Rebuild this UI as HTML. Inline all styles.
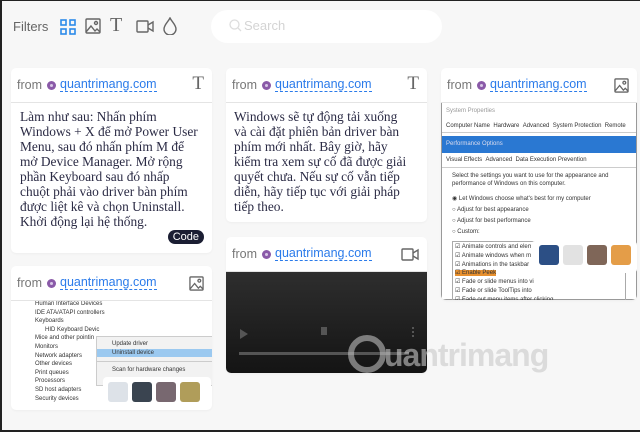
<!DOCTYPE html>
<html><head><meta charset="utf-8"><style>
*{box-sizing:border-box;margin:0;padding:0}
html,body{width:640px;height:432px;overflow:hidden}
body{background:#f7f7f7;font-family:"Liberation Sans",sans-serif;position:relative}
.abs{position:absolute}
.card{position:absolute;background:#fff;border-radius:5px;overflow:hidden;box-shadow:0 1px 2px rgba(0,0,0,.04)}
.hd{height:35px;border-bottom:1px solid #e4e4e4;display:flex;align-items:center;padding-left:6px;font-size:12.5px;color:#777;position:relative}
.dot{display:inline-block;width:9px;height:9px;border-radius:50%;background:#8a5aa8;margin:0 4px 0 5px;position:relative}
.dot:after{content:"";position:absolute;left:3px;top:3px;width:3px;height:3px;border-radius:50%;background:#d8c8e6}
.lk{color:#2b7bea;border-bottom:1px dashed #2b7bea;line-height:13px}
.ic{position:absolute;right:8px;top:9px}
.tx{font-family:"Liberation Serif","DejaVu Serif",serif;font-size:13.4px;line-height:15px;color:#2b2b45;padding:6px 11px 0 9px}
.sm{font-size:6px;color:#333;white-space:nowrap;line-height:8.6px}
.sw{position:absolute;width:20px;height:20px;border-radius:3px}
</style></head><body>
<div class="abs" style="left:0;top:0;width:2px;height:432px;background:#222"></div>
<div class="abs" style="left:0;top:0;width:640px;height:1px;background:#222"></div>
<div class="abs" style="left:0;top:430px;width:640px;height:2px;background:#222"></div>
<div class="abs" style="left:13px;top:19px;font-size:13px;color:#666">Filters</div>
<svg class="abs" style="left:60px;top:19px" width="16" height="16" viewBox="0 0 16 16" fill="none" stroke="#2b8aea" stroke-width="1.6"><rect x="1" y="1" width="5" height="5"/><rect x="10" y="1" width="5" height="5"/><rect x="1" y="10" width="5" height="5"/><rect x="10" y="10" width="5" height="5"/></svg>
<svg class="abs" style="left:85px;top:18px" width="16" height="16" viewBox="0 0 16 16" fill="none" stroke="#666" stroke-width="1.4"><rect x="1" y="1" width="14" height="14" rx="1"/><circle cx="11" cy="5" r="1.5"/><path d="M1 14l5-6 4 5 2-2 3 3"/></svg>
<div class="abs" style="left:110px;top:14px;font-family:'Liberation Serif',serif;font-size:20px;color:#666">T</div>
<svg class="abs" style="left:136px;top:20px" width="18" height="13" viewBox="0 0 18 13" fill="none" stroke="#666" stroke-width="1.4"><rect x="1" y="1" width="11" height="11" rx="1"/><path d="M12 5l5-3v9l-5-3"/></svg>
<svg class="abs" style="left:163px;top:17px" width="14" height="18" viewBox="0 0 14 18" fill="none" stroke="#666" stroke-width="1.4"><path d="M7 1C5 5 1 8 1 12a6 6 0 0012 0C13 8 9 5 7 1z"/></svg>
<div class="abs" style="left:211px;top:10px;width:231px;height:33px;background:#fff;border-radius:17px"></div>
<svg class="abs" style="left:229px;top:19px" width="13" height="13" viewBox="0 0 13 13" fill="none" stroke="#ddd" stroke-width="1.3"><circle cx="5.5" cy="5.5" r="4.5"/><path d="M9 9l3 3"/></svg>
<div class="abs" style="left:244px;top:18px;font-size:13px;color:#d4d4d4">Search</div>

<div class="card" style="left:11px;top:68px;width:201px;height:185px">
<div class="hd">from<span class="dot"></span><span class="lk">quantrimang.com</span><span class="ic" style="font-family:'Liberation Serif',serif;font-size:19px;top:5px;color:#666">T</span></div>
<div class="tx">Làm như sau: Nhấn phím Windows + X để mở Power User Menu, sau đó nhấn phím M để mở Device Manager. Mở rộng phần Keyboard sau đó nhấp chuột phải vào driver bàn phím được liệt kê và chọn Uninstall. Khởi động lại hệ thống.</div>
<div class="abs" style="right:8px;bottom:9px;background:#1b1e33;color:#fff;font-size:11px;padding:1px 5px;border-radius:8px">Code</div>
</div>

<div class="card" style="left:226px;top:68px;width:201px;height:154px">
<div class="hd">from<span class="dot"></span><span class="lk">quantrimang.com</span><span class="ic" style="font-family:'Liberation Serif',serif;font-size:19px;top:5px;color:#666">T</span></div>
<div class="tx" style="padding:6px 20px 0 8px">Windows sẽ tự động tải xuống và cài đặt phiên bản driver bàn phím mới nhất. Bây giờ, hãy kiểm tra xem sự cố đã được giải quyết chưa. Nếu sự cố vẫn tiếp diễn, hãy tiếp tục với giải pháp tiếp theo.</div>
</div>

<div class="card" style="left:226px;top:237px;width:201px;height:136px">
<div class="hd">from<span class="dot"></span><span class="lk">quantrimang.com</span>
<svg class="ic" style="top:11px" width="18" height="13" viewBox="0 0 18 13" fill="none" stroke="#666" stroke-width="1.4"><rect x="1" y="1" width="11" height="11" rx="1"/><path d="M12 5l5-3v9l-5-3"/></svg></div>
<div style="height:101px;background:linear-gradient(#2e2e2e,#141414);position:relative">
<div class="abs" style="left:14px;top:57px;width:0;height:0;border-left:8px solid #555;border-top:5px solid transparent;border-bottom:5px solid transparent"></div>
<div class="abs" style="left:13px;top:80px;width:170px;height:3px;background:#555"></div>
<div class="abs" style="left:95px;top:55px;width:6px;height:8px;background:#555"></div>
<div class="abs" style="left:186px;top:55px;width:2px;height:10px;border-left:2px dotted #555"></div>
</div>
</div>
<div class="abs" style="left:348px;top:335px;width:38px;height:38px;border-radius:50%;border:6px solid rgba(190,190,190,.6)"></div>
<div class="abs" style="left:384px;top:337px;font-size:32px;font-weight:bold;color:rgba(200,200,200,.6);letter-spacing:-1px">uantrimang</div>

<div class="card" style="left:11px;top:266px;width:201px;height:144px">
<div class="hd">from<span class="dot"></span><span class="lk">quantrimang.com</span>
<svg class="ic" style="top:10px" width="15" height="15" viewBox="0 0 16 16" fill="none" stroke="#666" stroke-width="1.4"><rect x="1" y="1" width="14" height="14" rx="1"/><circle cx="11" cy="5" r="1.5"/><path d="M1 14l5-6 4 5 2-2 3 3"/></svg></div>
<div class="sm" style="padding:0 0 0 24px;margin-top:-1px">
<div>Human Interface Devices</div><div>IDE ATA/ATAPI controllers</div><div>Keyboards</div><div style="padding-left:10px">HID Keyboard Devic</div><div>Mice and other pointin</div><div>Monitors</div><div>Network adapters</div><div>Other devices</div><div>Print queues</div><div>Processors</div><div>SD host adapters</div><div>Security devices</div></div>
<div class="abs sm" style="left:85px;top:70px;width:123px;height:50px;background:#f2f2f2;border:1px solid #ccc;padding-top:3px">
<div style="padding-left:15px">Update driver</div><div style="padding-left:15px;background:#9bc9f0">Uninstall device</div><div style="border-top:1px solid #ccc;margin-top:4px;padding:4px 0 0 15px">Scan for hardware changes</div></div>
<div class="abs" style="left:92px;top:111px;width:108px;height:30px;background:#fff;border-radius:4px"></div>
<div class="sw" style="left:97px;top:116px;background:#dde2e8"></div>
<div class="sw" style="left:121px;top:116px;background:#3a4450"></div>
<div class="sw" style="left:145px;top:116px;background:#786870"></div>
<div class="sw" style="left:169px;top:116px;background:#b09d5a"></div>
</div>

<div class="card" style="left:441px;top:68px;width:196px;height:232px">
<div class="hd">from<span class="dot"></span><span class="lk">quantrimang.com</span>
<svg class="ic" style="top:10px" width="15" height="15" viewBox="0 0 16 16" fill="none" stroke="#666" stroke-width="1.4"><rect x="1" y="1" width="14" height="14" rx="1"/><circle cx="11" cy="5" r="1.5"/><path d="M1 14l5-6 4 5 2-2 3 3"/></svg></div>
<div class="sm" style="position:relative;height:197px;border:1px solid #999;border-top:0">
<div style="color:#999;padding:4px 4px">System Properties</div>
<div style="padding:2px 4px;border-bottom:1px solid #ccc">Computer Name &nbsp;Hardware &nbsp;Advanced &nbsp;System Protection &nbsp;Remote</div>
<div style="background:#2a78d2;color:#dde;padding:4px 4px;margin-top:3px">Performance Options</div>
<div style="padding:3px 4px;border-bottom:1px solid #ccc">Visual Effects &nbsp;Advanced &nbsp;Data Execution Prevention</div>
<div style="padding:4px 10px;line-height:8px">Select the settings you want to use for the appearance and<br>performance of Windows on this computer.</div>
<div style="padding:2px 10px;line-height:11px">◉ Let Windows choose what's best for my computer<br>○ Adjust for best appearance<br>○ Adjust for best performance<br>○ Custom:</div>
<div style="margin:1px 10px;border:1px solid #aaa;padding:1px 2px;line-height:8.7px">☑ Animate controls and elements inside windows<br>☑ Animate windows when minimizing and maximizing<br>☑ Animations in the taskbar<br><span style="background:#e8902e">☑ Enable Peek</span><br>☑ Fade or slide menus into vi<br>☑ Fade or slide ToolTips into<br>☑ Fade out menu items after clicking</div>
<div class="abs" style="left:89px;top:138px;width:106px;height:32px;background:#fff;border-radius:4px"></div>
<div class="sw" style="left:97px;top:142px;background:#2c4f85"></div>
<div class="sw" style="left:121px;top:142px;background:#e2e2e2"></div>
<div class="sw" style="left:145px;top:142px;background:#7f6658"></div>
<div class="sw" style="left:169px;top:142px;background:#e49d48"></div>
</div>
</div>
</body></html>
